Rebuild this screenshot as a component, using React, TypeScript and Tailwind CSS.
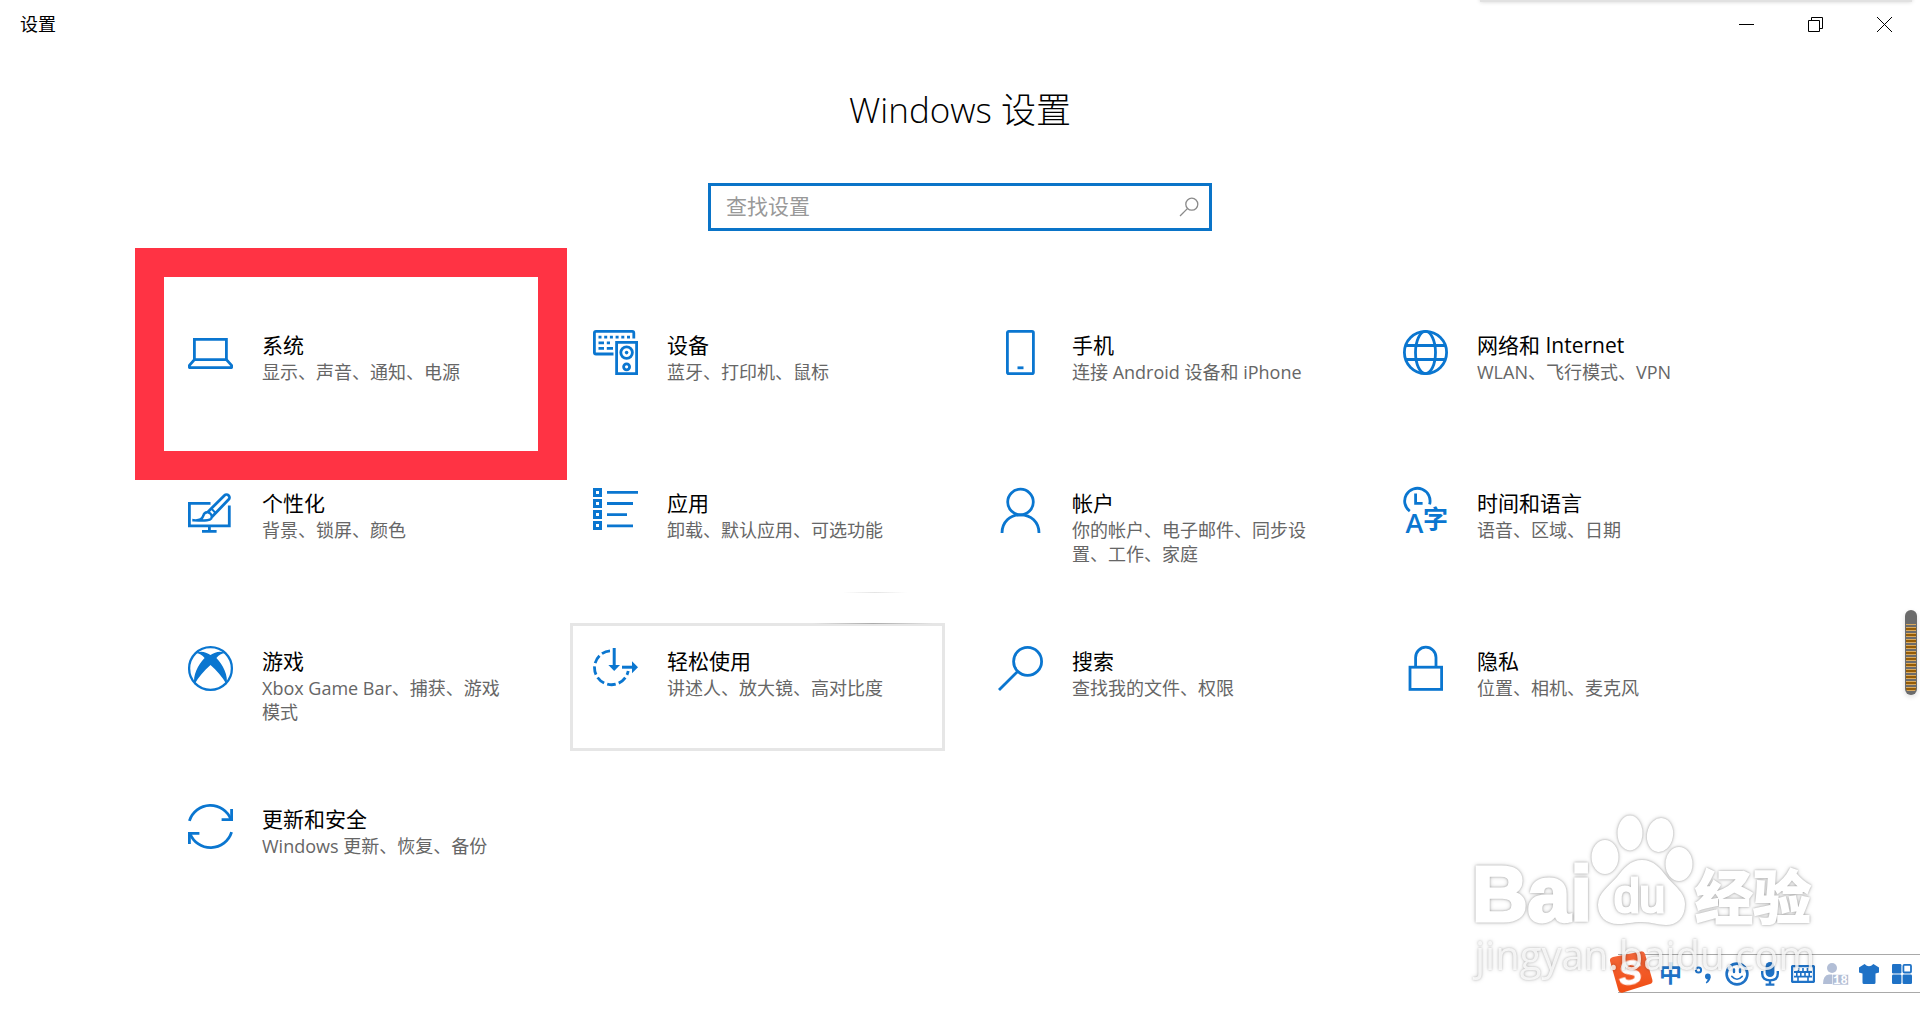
import { useState, type ReactNode } from 'react';

interface Category {
  id: string;
  title: string;
  description: string;
  icon: ReactNode;
  focused?: boolean;
  marked?: boolean;
}

function TileIcon({ children }: { children: ReactNode }) {
  return (
    <svg
      viewBox="0 0 45 45"
      className="h-[45px] w-[45px] shrink-0 overflow-visible text-[#0a76d0]"
      fill="none"
      stroke="currentColor"
      strokeWidth="2.8"
      aria-hidden="true"
    >
      {children}
    </svg>
  );
}

const categories: Category[] = [
  {
    id: 'system',
    title: '系统',
    description: '显示、声音、通知、电源',
    marked: true,
    icon: (
      <TileIcon>
        <path d="M6.4 30V9.4H38.4V30" />
        <path d="M6.4 29.6H38.4L43.6 35.4V37.6H1.4V35.4Z" strokeLinejoin="round" />
      </TileIcon>
    ),
  },
  {
    id: 'devices',
    title: '设备',
    description: '蓝牙、打印机、鼠标',
    icon: (
      <TileIcon>
        <path d="M20.5 24H3Q1.4 24 1.4 22.4V3Q1.4 1.4 3 1.4H39.2Q40.8 1.4 40.8 3V8.5" />
        <path d="M5.5 7.2H38" strokeDasharray="3 2.7" />
        <path d="M5.5 12.8H11M13.8 12.8H17M5.5 18.4H11M13.8 18.4H20" />
        <path d="M23.6 12.4H43.6V43.6H23.6Z" />
        <circle cx="33.6" cy="22.6" r="5.8" />
        <circle cx="33.6" cy="22.6" r="1.8" fill="currentColor" stroke="none" />
        <circle cx="33.6" cy="36.8" r="3" />
      </TileIcon>
    ),
  },
  {
    id: 'phone',
    title: '手机',
    description: '连接 Android 设备和 iPhone',
    icon: (
      <TileIcon>
        <rect x="9.4" y="1.4" width="26" height="42.2" rx="1.4" />
        <path d="M19.5 37.8H25.5" />
      </TileIcon>
    ),
  },
  {
    id: 'network',
    title: '网络和 Internet',
    description: 'WLAN、飞行模式、VPN',
    icon: (
      <TileIcon>
        <circle cx="22.5" cy="22.5" r="21.1" />
        <ellipse cx="22.5" cy="22.5" rx="10" ry="21.1" />
        <path d="M2.6 15.5H42.4M2.6 29.5H42.4" />
      </TileIcon>
    ),
  },
  {
    id: 'personalization',
    title: '个性化',
    description: '背景、锁屏、颜色',
    icon: (
      <TileIcon>
        <path d="M22.5 15.4H1.4V37.8H41.3V17.5" />
        <path d="M21.4 38V43.4M14 43.4H28.6" />
        <path d="M19.4 24.4L36.4 7.4A2.9 2.9 0 0 1 40.6 11.6L23.8 29" />
        <path d="M23.4 20.6L27.6 25" strokeWidth="2" />
        <path
          d="M5.5 32.2C10.5 32.8 13.8 32 15.2 28C16 25 18 23.9 20.2 24.4C23.4 25.4 24.6 28 23.2 30.6C21.6 33 15.5 32.4 5.5 32.4Z"
          strokeWidth="2.4"
        />
      </TileIcon>
    ),
  },
  {
    id: 'apps',
    title: '应用',
    description: '卸载、默认应用、可选功能',
    icon: (
      <TileIcon>
        <g strokeWidth="3">
          <rect x="1.5" y="1.5" width="6" height="6" />
          <rect x="1.5" y="12.5" width="6" height="6" />
          <rect x="1.5" y="23.5" width="6" height="6" />
          <rect x="1.5" y="34.5" width="6" height="6" />
        </g>
        <path d="M14 4.3H45M14 15.5H40M14 26.7H34M14 37.9H40" />
      </TileIcon>
    ),
  },
  {
    id: 'accounts',
    title: '帐户',
    description: '你的帐户、电子邮件、同步设置、工作、家庭',
    icon: (
      <TileIcon>
        <circle cx="22.5" cy="14" r="12.8" />
        <path d="M4 45C4 34 12 26.8 22.5 26.8S41 34 41 45" />
      </TileIcon>
    ),
  },
  {
    id: 'time',
    title: '时间和语言',
    description: '语音、区域、日期',
    icon: (
      <TileIcon>
        <path d="M6.8 23.2A12.7 12.7 0 1 1 26.6 16.4" />
        <path d="M12.6 5.5V15.4H19.6" />
        <text
          x="2.6"
          y="45"
          fill="currentColor"
          stroke="none"
          className="font-['Open_Sans',sans-serif] text-[27px] font-semibold"
        >
          A
        </text>
        <text
          x="20"
          y="40"
          fill="currentColor"
          stroke="none"
          className="font-['Noto_Sans_CJK_SC',sans-serif] text-[25px] font-bold"
        >
          字
        </text>
      </TileIcon>
    ),
  },
  {
    id: 'gaming',
    title: '游戏',
    description: 'Xbox Game Bar、捕获、游戏模式',
    icon: (
      <TileIcon>
        <circle cx="22.5" cy="22.5" r="21.4" strokeWidth="2.3" />
        <path
          d="M8 7C13 4.6 18 6.2 22.5 9C27 6.2 32 4.6 37 7C34 7.4 30.6 9 28.4 12C35 19 40.400 29.5 38.6 38.4C34.6 31 28.6 24.4 22.5 19C16.4 24.4 10.4 31 6.4 38.4C4.600 29.5 10 19 16.6 12C14.4 9 11 7.4 8 7Z"
          fill="currentColor"
          stroke="none"
        />
      </TileIcon>
    ),
  },
  {
    id: 'ease',
    title: '轻松使用',
    description: '讲述人、放大镜、高对比度',
    focused: true,
    icon: (
      <TileIcon>
        <path d="M17 4.8A17 17 0 1 0 35.2 25" strokeDasharray="8.6 3.2" />
        <path d="M21.2 2V21" strokeWidth="3" />
        <path d="M15.4 19H27L21.2 25Z" fill="currentColor" stroke="none" />
        <path d="M29 21.2H41" strokeWidth="3" />
        <path d="M39 15.2L45 21.2L39 27.2Z" fill="currentColor" stroke="none" />
      </TileIcon>
    ),
  },
  {
    id: 'search',
    title: '搜索',
    description: '查找我的文件、权限',
    icon: (
      <TileIcon>
        <circle cx="29.6" cy="15.4" r="14" />
        <path d="M19.6 25.4L1 44" />
      </TileIcon>
    ),
  },
  {
    id: 'privacy',
    title: '隐私',
    description: '位置、相机、麦克风',
    icon: (
      <TileIcon>
        <rect x="7" y="21.2" width="31.6" height="22.2" />
        <path d="M12.6 21V11.4A10.2 10.2 0 0 1 33 11.4V21" />
      </TileIcon>
    ),
  },
  {
    id: 'update',
    title: '更新和安全',
    description: 'Windows 更新、恢复、备份',
    icon: (
      <TileIcon>
        <path d="M1.4 16.8A22 22 0 0 1 43 15.6" />
        <path d="M43.6 5V15.6H33.6" />
        <path d="M43.6 28.2A22 22 0 0 1 2 29.4" />
        <path d="M1.4 40V29.4H11.4" />
      </TileIcon>
    ),
  },
];

function TitleBar() {
  return (
    <header className="flex h-12 items-center justify-between pr-px pl-5">
      <span className="text-lg text-black">设置</span>
      <div className="flex h-full">
        <button type="button" aria-label="最小化" className="flex w-[69px] items-center justify-center">
          <svg viewBox="0 0 15 15" className="h-[15px] w-[15px]" stroke="#000" fill="none">
            <path d="M0 7.5H15" />
          </svg>
        </button>
        <button type="button" aria-label="向下还原" className="flex w-[69px] items-center justify-center">
          <svg viewBox="0 0 15 15" className="h-[15px] w-[15px]" stroke="#000" fill="none">
            <path d="M0.5 3.5H11.5V14.5H0.5ZM3.5 3.5V0.5H14.5V11.5H11.5" />
          </svg>
        </button>
        <button type="button" aria-label="关闭" className="flex w-[69px] items-center justify-center">
          <svg viewBox="0 0 15 15" className="h-[15px] w-[15px]" stroke="#000" fill="none">
            <path d="M0 0L15 15M15 0L0 15" />
          </svg>
        </button>
      </div>
    </header>
  );
}

function SearchBox() {
  const [query, setQuery] = useState('');

  return (
    <label className="mt-[47px] flex h-12 w-[504px] items-center border-[3px] border-[#0a74c8] bg-white pr-2.5 pl-[15px]">
      <input
        type="text"
        aria-label="查找设置"
        placeholder="查找设置"
        value={query}
        onChange={(e) => setQuery(e.target.value)}
        className="min-w-0 flex-1 text-[21px] text-black outline-none placeholder:text-[#999]"
      />
      <svg viewBox="0 0 20 20" className="h-5 w-5" stroke="#8a8a8a" strokeWidth="1.3" fill="none" aria-hidden="true">
        <circle cx="12.8" cy="7.2" r="6" />
        <path d="M8.4 11.6L1 19" />
      </svg>
    </label>
  );
}

function CategoryTile({ category }: { category: Category }) {
  return (
    <a
      href={`#${category.id}`}
      className={`relative flex min-h-32 items-start border-[3px] p-5 ${
        category.focused ? 'border-[#e6e6e6]' : 'border-transparent'
      }`}
    >
      {category.icon}
      <span className="flex flex-col pl-[29px]">
        <span className="text-[21px] leading-[30px] text-black">{category.title}</span>
        <span className="w-[250px] text-lg leading-6 text-[#666]">{category.description}</span>
      </span>
      {/* Pointer reveal glow along the top edge */}
      {category.focused && (
        <>
          <span className="absolute -top-[3px] left-60 h-px w-[120px] bg-linear-to-r from-transparent via-[#aaa] to-transparent" />
          <span className="absolute -top-[34px] left-[270px] h-px w-16 bg-linear-to-r from-transparent via-[#e4e4e4] to-transparent" />
        </>
      )}
      {/* Red marker round the entry to open */}
      {category.marked && (
        <span className="pointer-events-none absolute -top-[62px] -left-[33px] h-[232px] w-[432px] border-[29px] border-[#ff3344]" />
      )}
    </a>
  );
}

function ImeBar() {
  const button = 'flex w-[33px] items-center justify-center';

  return (
    <div className="fixed right-0 bottom-[27px] flex h-[39px] border-y border-[#a9a9a9] bg-white pr-0.5 pl-9 text-[#1f72c6]">
      <svg viewBox="0 0 46 44" className="absolute -top-1 -left-2.5 h-11 w-[46px]" aria-hidden="true">
        <defs>
          <linearGradient id="sogou" x1="0" y1="0" x2="0" y2="1">
            <stop offset="0" stopColor="#f4683c" />
            <stop offset="1" stopColor="#f04c12" />
          </linearGradient>
        </defs>
        <path
          d="M5 6L33 0.4Q36 0 37 3L44.4 29Q45 32 42 33L15 41.6Q11.6 42.4 10.4 39.4L2 10Q1.4 7 5 6Z"
          fill="url(#sogou)"
        />
        <text
          x="22"
          y="33"
          textAnchor="middle"
          fill="#fff"
          stroke="#fff"
          strokeWidth="1.4"
          transform="rotate(-8 23 22)"
          className="font-['Liberation_Sans',sans-serif] text-[34px] font-bold italic"
        >
          S
        </text>
      </svg>
      <button type="button" className={`${button} text-[23px] font-bold`}>中</button>
      <button type="button" aria-label="标点" className={button}>
        <svg viewBox="0 0 20 20" className="h-5 w-5" fill="none" stroke="currentColor" strokeWidth="2">
          <circle cx="4.5" cy="6" r="2.6" />
          <circle cx="13.8" cy="12.4" r="2.8" fill="currentColor" stroke="none" />
          <path d="M16.6 12.4Q16.6 17 12.4 19.4L11.8 18.6Q14 16.5 13.8 14Z" fill="currentColor" stroke="none" />
        </svg>
      </button>
      <button type="button" aria-label="表情" className={button}>
        <svg viewBox="0 0 24 24" className="h-6 w-6" fill="none" stroke="currentColor" strokeWidth="2.6">
          <circle cx="12" cy="12" r="10.4" />
          <path d="M9 7.4V10M15 7.4V10" strokeWidth="2.4" strokeLinecap="round" />
          <path d="M6.8 14.4Q12 20 17.2 14.4" strokeWidth="1.6" strokeLinecap="round" />
        </svg>
      </button>
      <button type="button" aria-label="语音" className={button}>
        <svg viewBox="0 0 18 24" className="h-6 w-[18px]" fill="none" stroke="currentColor" strokeWidth="2.4">
          <rect x="4.6" y="0" width="8.8" height="15" rx="4.4" fill="currentColor" stroke="none" />
          <path d="M1.2 9V11.5Q1.2 18.4 9 18.4T16.8 11.5V9M9 18V23M4.6 22.6H13.4" />
        </svg>
      </button>
      <button type="button" aria-label="软键盘" className={button}>
        <svg viewBox="0 0 24 18" className="h-[18px] w-6" fill="none" stroke="currentColor" strokeWidth="2">
          <rect x="1" y="1" width="22" height="16" rx="1.5" strokeWidth="2.4" />
          <path d="M3 7H21M3 11.6H21" strokeWidth="1.8" />
          <path d="M7.5 3V7M12 3V7M16.5 3V7M5.8 7V11M9.8 7V11M14 7V11M18.2 7V11M7 12V16M17 12V16" strokeWidth="1.6" />
        </svg>
      </button>
      <button type="button" aria-label="个人中心" className={button}>
        <svg viewBox="0 0 26 24" className="h-6 w-[26px]" fill="#b2bed6">
          <circle cx="9" cy="6" r="5" />
          <path d="M0 22Q0 13 6 12.4H12Q18 13 18 22Z" />
          <rect x="9.5" y="12.5" width="16" height="10.5" fill="#b2bed6" stroke="#fff" strokeWidth="0.6" />
          <text x="17.5" y="22" textAnchor="middle" fill="#fff" className="font-['Liberation_Mono',monospace] text-[12px] font-bold">
            18
          </text>
        </svg>
      </button>
      <button type="button" aria-label="皮肤" className={button}>
        <svg viewBox="0 0 22 22" className="h-[22px] w-[22px]" fill="currentColor">
          <path d="M6.6 1Q11 5.4 15.4 1L21 4.6V9.6L17.5 10.4V19.5Q17.5 21 16 21H6Q4.5 21 4.5 19.5V10.4L1 9.6V4.6Z" />
        </svg>
      </button>
      <button type="button" aria-label="工具箱" className={button}>
        <svg viewBox="0 0 20 20" className="h-5 w-5" fill="currentColor">
          <rect x="0" y="0" width="9.4" height="9.4" rx="1.2" />
          <rect x="11.4" y="0.9" width="7.6" height="7.6" rx="1" fill="none" stroke="currentColor" strokeWidth="1.8" />
          <rect x="0" y="10.6" width="9.4" height="9.4" rx="1.2" />
          <rect x="10.6" y="10.6" width="9.4" height="9.4" rx="1.2" />
        </svg>
      </button>
    </div>
  );
}

function Watermark() {
  const glow = '[filter:drop-shadow(0_0_1px_rgba(0,0,0,0.25))_drop-shadow(0_0_2px_rgba(0,0,0,0.2))]';

  return (
    <div className="pointer-events-none fixed right-[100px] bottom-10 w-[350px]">
      <svg viewBox="0 0 350 120" className="block h-[120px] w-[350px] overflow-visible" fill="#fff">
        <g className={glow}>
          <text x="2" y="111" stroke="#fff" strokeWidth="3" className="font-['Liberation_Sans',sans-serif] text-[77px] font-bold">
            Bai
          </text>
        </g>
        <g className={glow}>
          <ellipse cx="135" cy="47" rx="13.5" ry="17" />
          <ellipse cx="160" cy="23" rx="12.5" ry="17.5" />
          <ellipse cx="190" cy="25" rx="13" ry="17" transform="rotate(10 190 25)" />
          <ellipse cx="209" cy="54" rx="13.5" ry="17" />
          <path d="M172 50C184 50 190 58 197 67C204 76 215 82 215 94C215 108 207 115 196 115C187 115 182 112 172 112C162 112 157 114 148 114C136 114 128 106 128 95C128 83 139 76 147 67C154 58 160 50 172 50Z" />
        </g>
        <g className={glow}>
          <text x="144" y="102" className="font-['Liberation_Sans',sans-serif] text-[46px]" stroke="#fff" strokeWidth="3">
            du
          </text>
        </g>
        <g className={glow}>
          <text x="225" y="109" className="font-['Noto_Sans_CJK_SC',sans-serif] text-[58px] font-bold" stroke="#fff" strokeWidth="2">
            经验
          </text>
        </g>
      </svg>
      <p className={`pl-[5px] text-[40px] leading-[50px] text-white/80 ${glow}`}>jingyan.baidu.com</p>
    </div>
  );
}

export default function App() {
  return (
    <div
      lang="zh-CN"
      className="relative min-h-screen bg-white font-['Open_Sans','Noto_Sans_CJK_SC',sans-serif] text-black"
    >
      {/* Shadow of the window that sits above this one */}
      <div className="absolute -top-2 right-2 h-2.5 w-[432px] bg-[#e1e1e1] shadow-[0_0_4px_#d4d4d4]" />
      <TitleBar />

      <main className="flex flex-col items-center pb-28">
        <h1 className="mt-9 text-[35px] leading-[52px] font-light">Windows 设置</h1>
        <SearchBox />
        <nav aria-label="设置类别" className="mt-[76px] grid grid-cols-[repeat(4,375px)] gap-[30px]">
          {categories.map((category) => (
            <CategoryTile key={category.id} category={category} />
          ))}
        </nav>
      </main>

      {/* Floating level meter on the right edge */}
      <div className="fixed top-[610px] right-[3px] h-[85px] w-3 rounded-md bg-[#6b6b6b] px-px pt-3.5 pb-0.5 shadow-[0_2px_5px_#ddd]">
        <div className="h-full rounded-b-md bg-[repeating-linear-gradient(180deg,#d9a85c_0_1px,#6b6b6b_1px_3px,#d9a85c_3px_4px,#955c06_4px_6px)]" />
      </div>

      <ImeBar />
      <Watermark />
    </div>
  );
}
